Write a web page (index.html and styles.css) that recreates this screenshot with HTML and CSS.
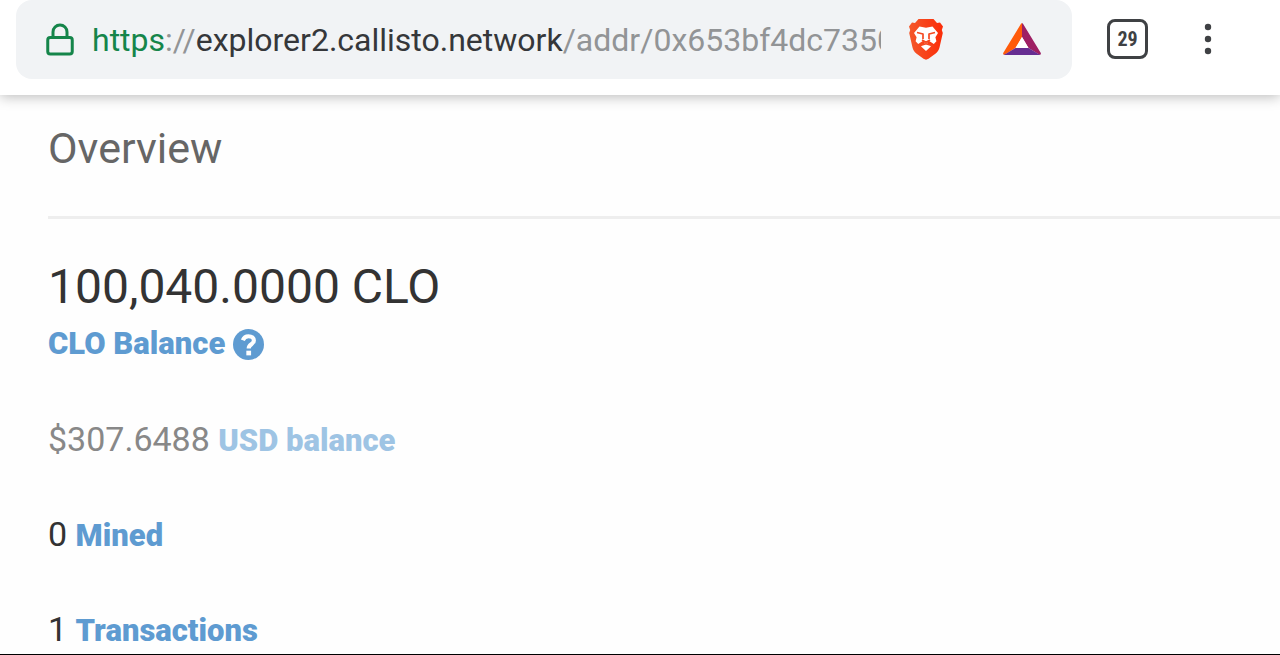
FILE: index.html
```html
<!DOCTYPE html>
<html lang="en">
<head>
<meta charset="utf-8">
<meta name="viewport" content="width=device-width, initial-scale=1">
<title>Address overview</title>
<link rel="stylesheet" href="styles.css">
</head>
<body>
<header class="toolbar">
  <div class="address-bar">
    <svg class="lock" viewBox="0 0 28 34" aria-hidden="true">
      <rect x="1.75" y="14.5" width="24.5" height="16.5" rx="2.5"/>
      <path d="M7 14.500V9a7 7 0 0 1 14 0v5.500"/>
    </svg>
    <div class="url"><span class="scheme">https</span>://<span class="host">explorer2.callisto.network</span>/addr/0x653bf4dc7350</div>
    <button class="icon-button" aria-label="Brave Shields">
      <svg class="lion" viewBox="0 0 36 42" aria-hidden="true">
        <defs><linearGradient id="flame" x1="0" y1="0" x2="1" y2="0"><stop offset="0" stop-color="#f4582b"/><stop offset="1" stop-color="#fb2c08"/></linearGradient></defs>
        <path fill="url(#flame)" d="M10.500 0h15l3.500 4 3-.5 3 4-1.200 3.500 1 3-3.300 14.500c-.6 2.500-1.800 4.300-3.800 6l-7.200 5.300c-1.600 1.100-3.400 1.100-5 0L8.300 34.500c-2-1.700-3.200-3.500-3.800-6L1.200 14l1-3L1 7.500l3-4 3 .5z"/>
        <path fill="#fff" d="M11.500 7.500l6.500 1.200 6.500-1.200 5.500 6.500-2.600 4.200 1 4-2.600 2.800-5-3.200-1.600.8v2l3.300 2c.5.300.5.800.1 1.100L18 32l-4.600-4.300c-.4-.3-.4-.8.1-1.100l3.300-2v-2l-1.600-.8-5 3.200-2.600-2.800 1-4L6 14z"/>
        <path fill="none" stroke="#f54921" stroke-width="1.700" stroke-linejoin="round" d="M9 13.500l6 1.500v5M27 13.500l-6 1.500v5M14 21l4 2.200 4-2.200M11.500 26.800l6.500-2 6.500 2"/>
      </svg>
    </button>
    <button class="icon-button" aria-label="Brave Rewards">
      <svg class="triangle" viewBox="0 0 38 34" aria-hidden="true">
        <path fill="#ff5a0a" d="M19 0v14l-6.500 11L1 32q-1.500-1-.5-2.500L18 .7z"/>
        <path fill="#9e1f63" d="M19 0l1 .7 17.500 28.800q1 1.500-.5 2.500l-11.500-7L19 14z"/>
        <path fill="#662d91" d="M12.500 25h13L37.300 32H.7z"/>
        <path fill="#fff" d="M19 14l6.500 11h-13z"/>
      </svg>
    </button>
  </div>
  <button class="tabs" aria-label="29 open tabs">29</button>
  <button class="menu" aria-label="Menu">
    <svg viewBox="0 0 8 32" aria-hidden="true"><circle cx="4" cy="4" r="3.200"/><circle cx="4" cy="16" r="3.200"/><circle cx="4" cy="28" r="3.200"/></svg>
  </button>
</header>
<main class="overview">
  <h1 class="title">Overview</h1>
  <section class="stats">
    <div class="balance">
      <p class="amount">100,040.0000 CLO</p>
      <p class="label balance-label">CLO Balance
        <svg class="help" viewBox="0 0 30 30" role="img" aria-label="Help">
          <circle cx="15" cy="15" r="15"/>
          <path d="M9.500 10.800C10.500 8.300 12.500 7 15 7c3.200 0 5.200 1.700 5.200 4.200 0 3.700-5 3.500-5 7.600"/>
          <rect x="12.900" y="21" width="4.600" height="4.500"/>
        </svg>
      </p>
    </div>
    <p class="stat muted">$307.6488 <span class="label">USD balance</span></p>
    <p class="stat">0 <span class="label">Mined</span></p>
    <p class="stat">1 <span class="label">Transactions</span></p>
  </section>
</main>
</body>
</html>
```
FILE: styles.css
```css
* {
  box-sizing: border-box;
}

body {
  display: flex;
  flex-direction: column;
  min-height: 100vh;
  margin: 0;
  border-bottom: 1px solid #000;
  background: #fefefe;
  color: #333;
  font-family: Roboto, "Liberation Sans", sans-serif;
}

h1,
p {
  margin: 0;
}

button {
  padding: 0;
  border: 0;
  background: none;
  color: inherit;
  font: inherit;
}

.toolbar {
  display: flex;
  align-items: flex-start;
  padding: 0 68px 16px 16px;
  background: #fff;
  box-shadow: 0 2px 12px rgba(0, 0, 0, 0.26);
}

.address-bar {
  display: flex;
  flex: 1;
  align-items: center;
  min-width: 0;
  height: 79px;
  padding: 0 31px 0 30px;
  border-radius: 16px;
  background: #f1f3f5;
}

.lock {
  flex: none;
  width: 28px;
  height: 34px;
  margin-right: 18px;
  fill: none;
  stroke: #15854a;
  stroke-width: 3;
}

.url {
  flex: 1;
  min-width: 0;
  overflow: hidden;
  color: #929496;
  font-size: 32px;
  line-height: 40px;
  white-space: nowrap;
}

.scheme {
  color: #15854a;
}

.host {
  color: #35373a;
}

.icon-button {
  display: flex;
  flex: none;
}

.lion {
  width: 36px;
  height: 42px;
  margin: 0 59px 0 27px;
}

.triangle {
  width: 38px;
  height: 34px;
}

.tabs {
  width: 41px;
  height: 40px;
  margin: 19px 56px 0 35px;
  border: 3px solid #3f4144;
  border-radius: 8px;
  color: #3f4144;
  font-family: "Roboto Condensed", Roboto, sans-serif;
  font-size: 20px;
  font-stretch: condensed;
  font-weight: 700;
  line-height: 32px;
}

.menu {
  width: 8px;
  height: 32px;
  margin-top: 23px;
  fill: #3f4144;
}

.menu svg {
  display: block;
}

.overview {
  flex: 1;
  padding-left: 48px;
}

.title {
  padding: 25px 0 40px;
  border-bottom: 3px solid #eee;
  color: #666;
  font-size: 43px;
  font-weight: 400;
  line-height: 56px;
}

.stats {
  display: flex;
  flex-direction: column;
  gap: 47px;
  padding-top: 40px;
}

.amount {
  font-size: 48px;
  line-height: 56px;
}

.label {
  color: #5e9bd1;
  font-size: 31px;
  font-weight: 900;
  line-height: 32px;
}

.balance-label {
  display: flex;
  align-items: center;
  gap: 8px;
  margin-top: 5px;
  line-height: 48px;
}

.help {
  width: 31px;
  height: 31px;
  fill: #5e9bd1;
}

.help path {
  fill: none;
  stroke: #fefefe;
  stroke-width: 4;
}

.help rect {
  fill: #fefefe;
}

.stat {
  font-size: 34px;
  line-height: 48px;
}

.muted {
  color: #888;
}

.muted .label {
  color: #9ec4e4;
}
```
